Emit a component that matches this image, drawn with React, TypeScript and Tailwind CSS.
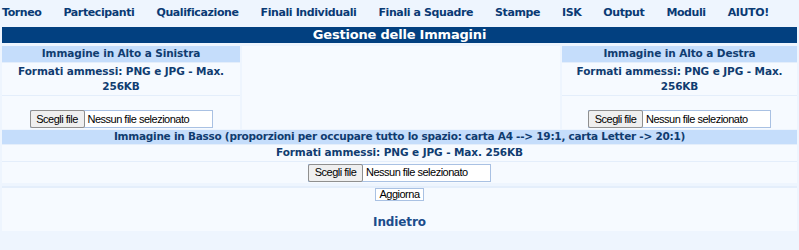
const MENU = [
  "Torneo",
  "Partecipanti",
  "Qualificazione",
  "Finali Individuali",
  "Finali a Squadre",
  "Stampe",
  "ISK",
  "Output",
  "Moduli",
  "AIUTO!",
];

function FileInput() {
  return (
    <div className="flex items-center shrink-0 whitespace-nowrap h-[18px] w-[183px] border border-[#a9c1e3] bg-white font-['Liberation_Sans',Arial,sans-serif] text-[11px] tracking-[-0.5px] text-black">
      <span className="h-[18px] w-[55px] flex items-center justify-center bg-[#efefef] border border-[#8f8f8f] rounded-[2px] -ml-px">
        Scegli file
      </span>
      <span className="pl-[3px]">Nessun file selezionato</span>
    </div>
  );
}

function ImageBox({ title }: { title: string }) {
  return (
    <div className="flex flex-col gap-px bg-[#e4eefb]">
      <div className="h-[16px] flex items-center justify-center bg-[#c5ddfb] font-bold">
        {title}
      </div>
      <div className="bg-[#f6faff] text-center font-bold leading-[15px] px-3 py-[1px]">
        Formati ammessi: PNG e JPG - Max. 256KB
      </div>
      <div className="bg-[#f6faff] h-[33px] flex items-end justify-center pb-[1px]">
        <FileInput />
      </div>
    </div>
  );
}

export default function App() {
  return (
    <div className="w-[799px] h-[250px] bg-[#eef5fe] font-['DejaVu_Sans',Verdana,sans-serif] text-[10.5px] tracking-[-0.1px] text-[#103c70] overflow-hidden">
      <div className="h-[27px] flex items-center gap-[22px] pl-[2px] font-bold text-[#0a3a74] text-[11px] tracking-[-0.4px]">
        {MENU.map((m) => (
          <span key={m}>{m}</span>
        ))}
      </div>

      <div className="mx-[2px] flex flex-col">
        <div className="h-[16px] bg-[#024080] text-white font-bold text-[13px] tracking-[-0.2px] flex items-center justify-center">
          Gestione delle Immagini
        </div>

        <div className="mt-[3px] grid grid-cols-[238px_1fr_235px] gap-[2px]">
          <ImageBox title="Immagine in Alto a Sinistra" />
          <div className="bg-[#f6faff]" />
          <ImageBox title="Immagine in Alto a Destra" />
        </div>

        <div className="mt-px flex flex-col gap-px bg-[#e4eefb]">
          <div className="h-[14px] flex items-center justify-center bg-[#c5ddfb] font-bold tracking-[-0.25px] whitespace-nowrap">
            Immagine in Basso (proporzioni per occupare tutto lo spazio: carta A4 --&gt; 19:1, carta Letter -&gt; 20:1)
          </div>
          <div className="h-[16px] bg-[#f6faff] flex items-center justify-center font-bold">
            Formati ammessi: PNG e JPG - Max. 256KB
          </div>
          <div className="h-[21px] bg-[#f6faff] flex items-center justify-center">
            <FileInput />
          </div>
        </div>

        <div className="mt-[3px] h-[45px] bg-[#f6faff] border-t-2 border-[#e4eefb] flex flex-col items-center">
          <button className="h-[16px] w-[49px] bg-white border border-[#a9c1e3] font-['Liberation_Sans',Arial,sans-serif] text-[11px] tracking-[-0.5px] text-black leading-none">
            Aggiorna
          </button>
          <span className="mt-[12px] font-bold text-[12px] text-[#1c4d8c]">Indietro</span>
        </div>
      </div>
    </div>
  );
}
